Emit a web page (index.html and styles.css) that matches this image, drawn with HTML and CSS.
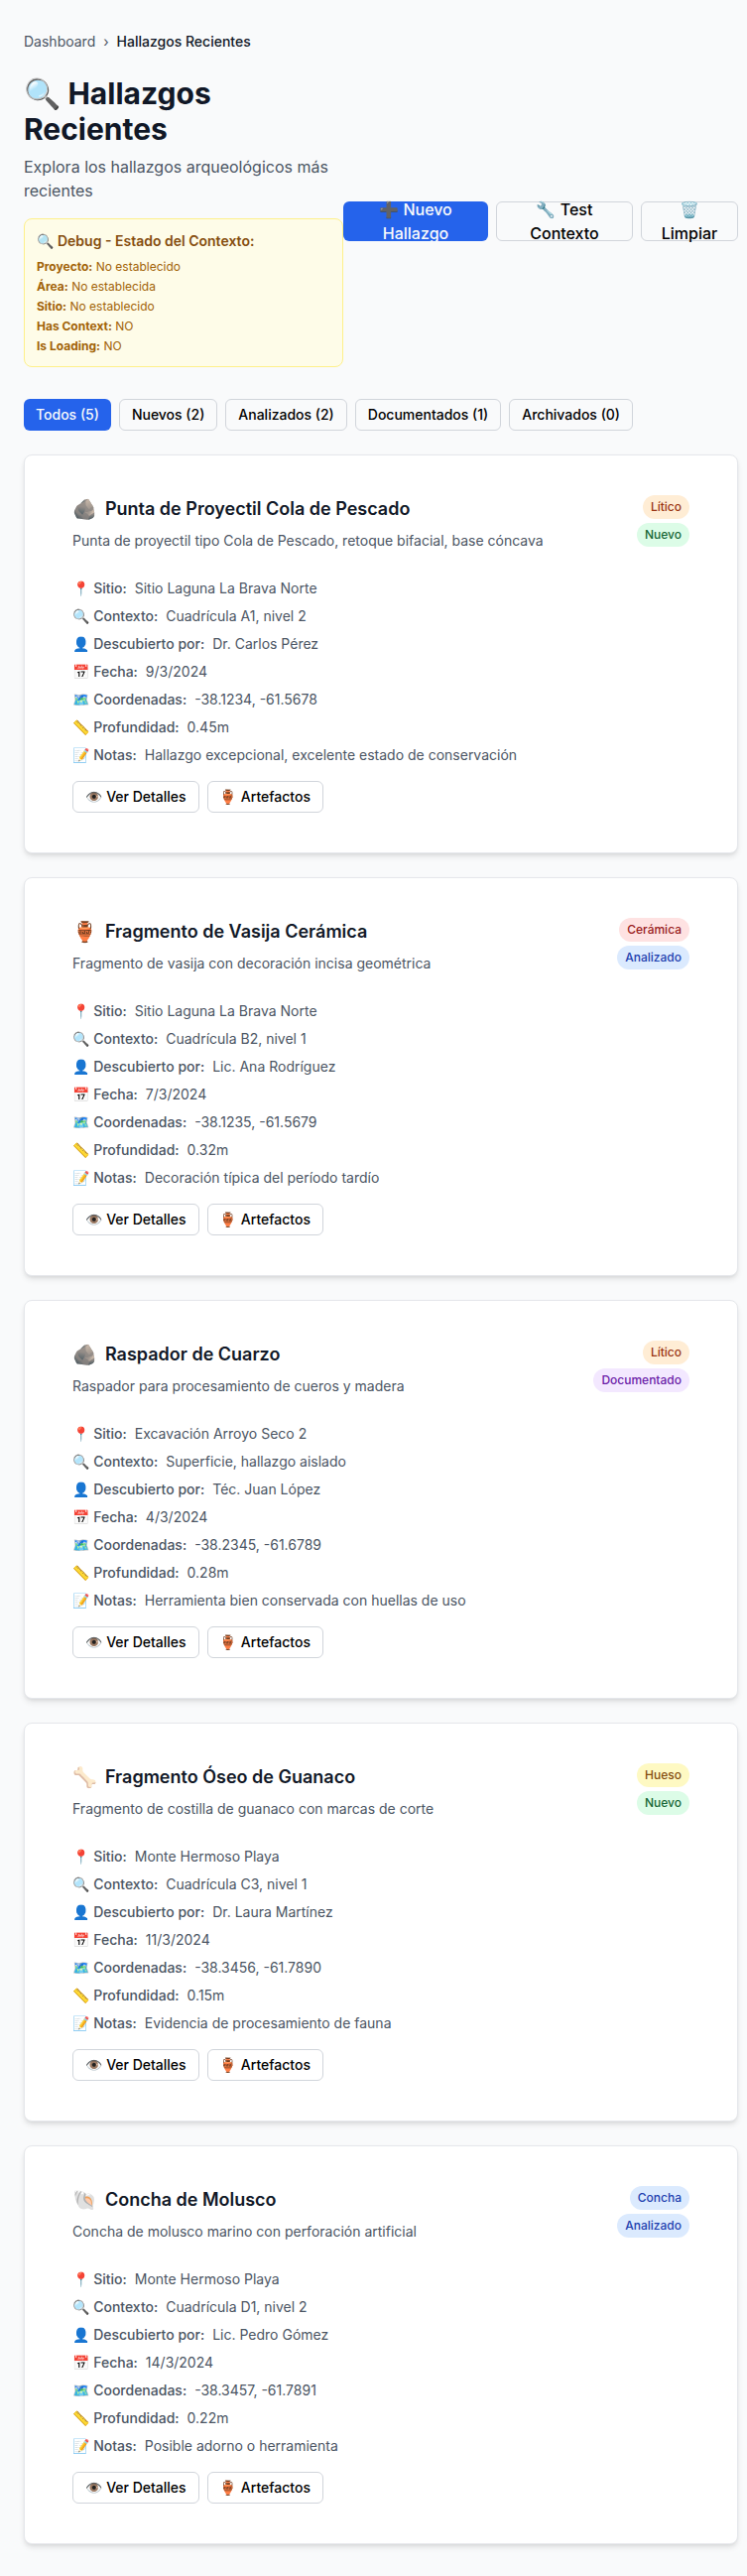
FILE: index.html
```html
<!DOCTYPE html>
<html lang="es">
<head>
<meta charset="utf-8">
<title>Hallazgos Recientes</title>
<link rel="stylesheet" href="styles.css">
</head>
<body>
<main class="page">
  <nav class="breadcrumb"><span>Dashboard</span><span>›</span><span class="current">Hallazgos Recientes</span></nav>
  <header class="header">
    <div class="intro">
      <h1>🔍 Hallazgos Recientes</h1>
      <p class="subtitle">Explora los hallazgos arqueológicos más recientes</p>
      <section class="debug">
        <h2>🔍 Debug - Estado del Contexto:</h2>
        <div class="debug-list">
          <div><strong>Proyecto:</strong> No establecido</div>
          <div><strong>Área:</strong> No establecida</div>
          <div><strong>Sitio:</strong> No establecido</div>
          <div><strong>Has Context:</strong> NO</div>
          <div><strong>Is Loading:</strong> NO</div>
        </div>
      </section>
    </div>
    <div class="actions">
      <button class="btn primary new">➕ Nuevo Hallazgo</button>
      <button class="btn test">🔧 Test Contexto</button>
      <button class="btn clear">🗑️ Limpiar</button>
    </div>
  </header>
  <div class="filters">
    <button class="btn small primary">Todos (5)</button>
    <button class="btn small">Nuevos (2)</button>
    <button class="btn small">Analizados (2)</button>
    <button class="btn small">Documentados (1)</button>
    <button class="btn small">Archivados (0)</button>
  </div>
  <div class="cards" id="cards"></div>
</main>
<script src="app.js"></script>
</body>
</html>
```
FILE: styles.css
```css
* { box-sizing: border-box; margin: 0; padding: 0; }
body { background: #f9fafb; font-family: Inter, "Noto Color Emoji", sans-serif; font-size: 16px; line-height: 24px; color: #111827; }
.page { width: 744px; padding: 32px 0 32px 24px; }
.breadcrumb { display: flex; gap: 8px; font-size: 14px; line-height: 20px; color: #4b5563; margin-bottom: 24px; }
.breadcrumb .current { color: #111827; font-weight: 500; }
.header { display: flex; align-items: center; justify-content: space-between; margin-bottom: 32px; }
.intro { width: 322px; flex: none; }
h1 { font-size: 30px; line-height: 36px; font-weight: 700; }
.subtitle { margin-top: 8px; color: #4b5563; }
.debug { margin-top: 16px; padding: 12px; border: 1px solid #fef08a; border-radius: 8px; background: #fefce8; }
.debug h2 { font-size: 14px; line-height: 20px; font-weight: 600; color: #854d0e; margin-bottom: 8px; }
.debug-list { display: flex; flex-direction: column; gap: 4px; font-size: 12px; line-height: 16px; color: #a16207; }
.debug-list strong { font-weight: 700; }
.actions { display: flex; gap: 8px; }
.btn { display: inline-flex; align-items: center; justify-content: center; height: 40px; padding: 0 16px; border: 1px solid #d1d5db; border-radius: 6px; background: transparent; color: #000; font-family: inherit; font-size: 16px; line-height: 24px; font-weight: 500; text-align: center; }
.btn.primary { background: #2563eb; border: 0; color: #f9fafb; }
.btn.new { width: 146px; }
.btn.test { width: 138px; }
.btn.clear { width: 98px; }
.btn.small { height: 32px; padding: 0 12px; font-size: 14px; line-height: 20px; white-space: nowrap; }
.filters { display: flex; gap: 8px; margin-bottom: 24px; }
.cards { display: flex; flex-direction: column; gap: 24px; }
.card { padding: 40px 48px; border: 1px solid #e5e7eb; border-radius: 8px; background: #fff; box-shadow: 0 4px 6px -1px rgba(0,0,0,.1), 0 2px 4px -2px rgba(0,0,0,.1); }
.card-head { display: flex; justify-content: space-between; align-items: flex-start; margin-bottom: 28px; }
.card-title { display: flex; align-items: center; gap: 8px; height: 28px; margin-bottom: 8px; }
.card-title .icon { font-size: 20px; line-height: 28px; }
.card-title h3 { font-size: 18px; line-height: 28px; font-weight: 600; }
.desc { font-size: 14px; line-height: 20px; color: #4b5563; }
.badges { display: flex; flex-direction: column; align-items: flex-end; gap: 4px; }
.badge { padding: 4px 8px; border-radius: 12px; font-size: 12px; line-height: 16px; font-weight: 500; }
.orange { background: #ffedd5; color: #9a3412; }
.green { background: #dcfce7; color: #166534; }
.red { background: #fee2e2; color: #991b1b; }
.blue { background: #dbeafe; color: #1e40af; }
.purple { background: #f3e8ff; color: #6b21a8; }
.yellow { background: #fef9c3; color: #854d0e; }
.facts { display: flex; flex-direction: column; gap: 8px; margin-bottom: 16px; font-size: 14px; line-height: 20px; color: #4b5563; }
.fact { display: flex; gap: 8px; height: 20px; }
.fact .label { font-weight: 500; }
.card-actions { display: flex; gap: 8px; }
```
FILE: app.js
```js
const finds = [
  ["🪨", "Punta de Proyectil Cola de Pescado", "Punta de proyectil tipo Cola de Pescado, retoque bifacial, base cóncava", "Lítico", "orange", "Nuevo", "green",
    ["Sitio Laguna La Brava Norte", "Cuadrícula A1, nivel 2", "Dr. Carlos Pérez", "9/3/2024", "-38.1234, -61.5678", "0.45m", "Hallazgo excepcional, excelente estado de conservación"]],
  ["🏺", "Fragmento de Vasija Cerámica", "Fragmento de vasija con decoración incisa geométrica", "Cerámica", "red", "Analizado", "blue",
    ["Sitio Laguna La Brava Norte", "Cuadrícula B2, nivel 1", "Lic. Ana Rodríguez", "7/3/2024", "-38.1235, -61.5679", "0.32m", "Decoración típica del período tardío"]],
  ["🪨", "Raspador de Cuarzo", "Raspador para procesamiento de cueros y madera", "Lítico", "orange", "Documentado", "purple",
    ["Excavación Arroyo Seco 2", "Superficie, hallazgo aislado", "Téc. Juan López", "4/3/2024", "-38.2345, -61.6789", "0.28m", "Herramienta bien conservada con huellas de uso"]],
  ["🦴", "Fragmento Óseo de Guanaco", "Fragmento de costilla de guanaco con marcas de corte", "Hueso", "yellow", "Nuevo", "green",
    ["Monte Hermoso Playa", "Cuadrícula C3, nivel 1", "Dr. Laura Martínez", "11/3/2024", "-38.3456, -61.7890", "0.15m", "Evidencia de procesamiento de fauna"]],
  ["🐚", "Concha de Molusco", "Concha de molusco marino con perforación artificial", "Concha", "blue", "Analizado", "blue",
    ["Monte Hermoso Playa", "Cuadrícula D1, nivel 2", "Lic. Pedro Gómez", "14/3/2024", "-38.3457, -61.7891", "0.22m", "Posible adorno o herramienta"]]
];
const labels = ["📍 Sitio:", "🔍 Contexto:", "👤 Descubierto por:", "📅 Fecha:", "🗺️ Coordenadas:", "📏 Profundidad:", "📝 Notas:"];

document.getElementById("cards").innerHTML = finds.map(([icon, title, desc, type, typeColor, status, statusColor, values]) => `
  <article class="card">
    <div class="card-head">
      <div>
        <div class="card-title"><span class="icon">${icon}</span><h3>${title}</h3></div>
        <p class="desc">${desc}</p>
      </div>
      <div class="badges"><span class="badge ${typeColor}">${type}</span><span class="badge ${statusColor}">${status}</span></div>
    </div>
    <div class="facts">${values.map((v, i) => `<div class="fact"><span class="label">${labels[i]}</span><span>${v}</span></div>`).join("")}</div>
    <div class="card-actions"><button class="btn small">👁️ Ver Detalles</button><button class="btn small">🏺 Artefactos</button></div>
  </article>`).join("");
```
